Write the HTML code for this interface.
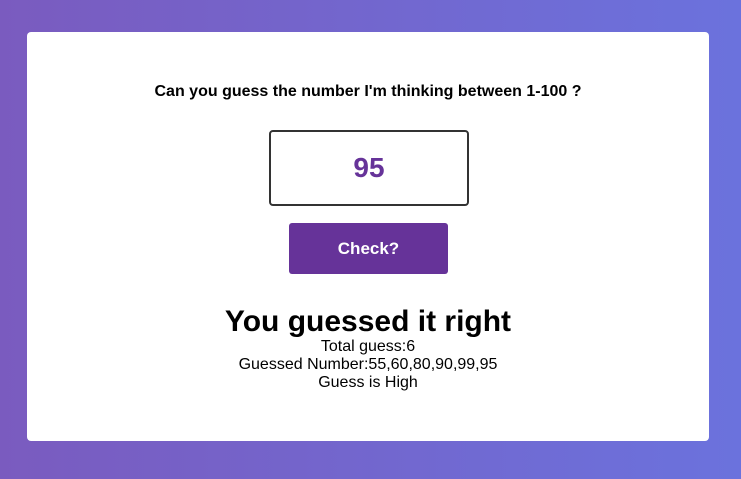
<!DOCTYPE html>
<html><head><style>
html,body{margin:0;padding:0;}
body{width:741px;height:479px;background:linear-gradient(90deg,#7a5bbf 0%,#6b72dd 100%);font-family:"Liberation Sans",Arial,sans-serif;position:relative;overflow:hidden;}
.card{position:absolute;left:27px;top:32px;width:682px;height:409px;background:#fff;border-radius:4px;}
.q{position:absolute;top:51px;left:0;width:100%;text-align:center;font-weight:bold;font-size:16px;color:#000;}
.box{position:absolute;left:242px;top:98px;width:196px;height:72px;border:2px solid #333;border-radius:4px;text-align:center;line-height:72px;font-size:28px;font-weight:bold;color:#663399;}
.btn{position:absolute;left:262px;top:191px;width:159px;height:51px;background:#663399;border-radius:3px;color:#fff;font-weight:bold;font-size:17px;text-align:center;line-height:51px;}
.h{position:absolute;top:272px;left:0;width:100%;text-align:center;font-weight:bold;font-size:30px;line-height:36px;color:#000;}
.t{position:absolute;top:306px;left:0;width:100%;text-align:center;font-size:16px;line-height:18px;color:#000;}
</style></head><body>
<div class="card">
<div class="q">Can you guess the number I'm thinking between 1-100 ?</div>
<div class="box">95</div>
<div class="btn">Check?</div>
<div class="h">You guessed it right</div>
<div class="t">Total guess:6<br>Guessed Number:55,60,80,90,99,95<br>Guess is High</div>
</div>
</body></html>
